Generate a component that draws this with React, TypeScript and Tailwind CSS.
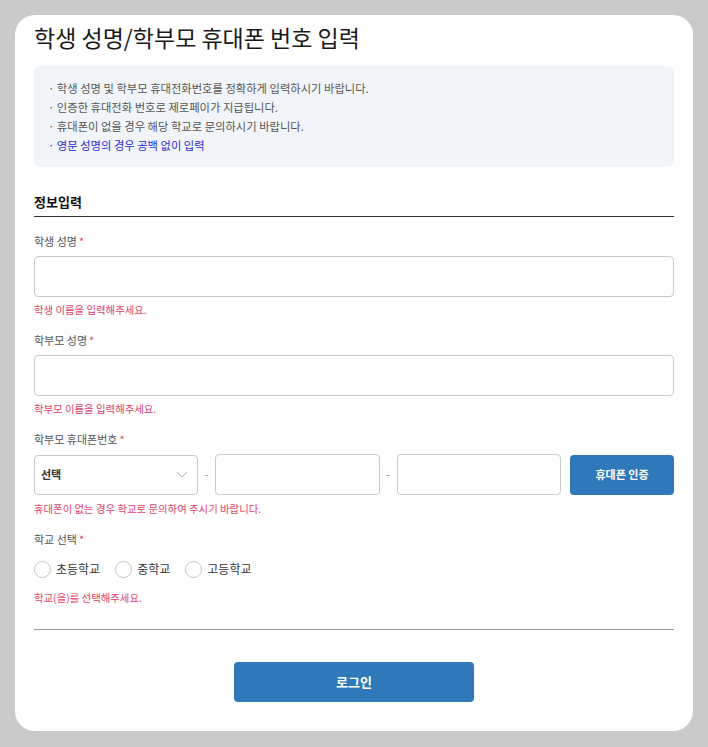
import React, { useState } from 'react';

const font = { fontFamily: '"Noto Sans CJK KR", "Noto Sans", sans-serif' };

function Label({ text }: { text: string }) {
  return (
    <div className="text-[11px] leading-[18px] text-[#555]">
      {text}
      <span className="ml-[2px] text-[#e0436b]">*</span>
    </div>
  );
}

function ErrorText({ text, className = '' }: { text: string; className?: string }) {
  return <p className={`text-[10.4px] leading-[16px] text-[#e0436b] ${className}`}>{text}</p>;
}

function TextInput({ className = '' }: { className?: string }) {
  return (
    <input
      type="text"
      className={`h-[41px] rounded-[4px] border border-[#c9c9c9] bg-white px-3 text-[12px] outline-none ${className}`}
    />
  );
}

export default function App() {
  const [school, setSchool] = useState('');
  const schools = ['초등학교', '중학교', '고등학교'];

  return (
    <div className="min-h-screen bg-[#cacaca] p-[15px]" style={font}>
      <div className="rounded-[20px] bg-white px-[19px] pt-[6px] pb-[29px]">
        <h1 className="text-[23px] leading-[32px] font-normal text-[#1a1a1a]">학생 성명/학부모 휴대폰 번호 입력</h1>

        {/* 안내 */}
        <ul className="mt-[13px] rounded-[6px] bg-[#f1f5f9] px-[14px] pt-[13px] pb-[12px] text-[11.3px] leading-[19px] text-[#555]">
          <li>· 학생 성명 및 학부모 휴대전화번호를 정확하게 입력하시기 바랍니다.</li>
          <li>· 인증한 휴대전화 번호로 제로페이가 지급됩니다.</li>
          <li>· 휴대폰이 없을 경우 해당 학교로 문의하시기 바랍니다.</li>
          <li className="text-[#2b2bd0]">· 영문 성명의 경우 공백 없이 입력</li>
        </ul>

        <h2 className="mt-[25px] border-b border-[#333] pb-[4px] text-[13px] leading-[20px] font-bold text-[#111]">정보입력</h2>

        <div className="mt-[15px]">
          <Label text="학생 성명" />
          <TextInput className="mt-[6px] w-full" />
          <ErrorText text="학생 이름을 입력해주세요." className="mt-[5px]" />
        </div>

        <div className="mt-[13px]">
          <Label text="학부모 성명" />
          <TextInput className="mt-[6px] w-full" />
          <ErrorText text="학부모 이름을 입력해주세요." className="mt-[5px]" />
        </div>

        <div className="mt-[13px]">
          <Label text="학부모 휴대폰번호" />
          <div className="mt-[6px] flex items-center">
            <div className="relative w-[164px]">
              <select className="h-[40px] w-full appearance-none rounded-[4px] border border-[#c9c9c9] bg-white pl-[6px] text-[11px] font-bold text-[#333] outline-none">
                <option>선택</option>
                <option>010</option>
                <option>011</option>
              </select>
              <svg className="pointer-events-none absolute right-[10px] top-[16px]" width="12" height="7" viewBox="0 0 12 7" fill="none">
                <path d="M1 1l5 5 5-5" stroke="#b5b5b5" strokeWidth="1" />
              </svg>
            </div>
            <span className="w-[17px] text-center text-[11px] text-[#999]">-</span>
            <TextInput className="h-[40px] min-w-0 flex-1" />
            <span className="w-[17px] text-center text-[11px] text-[#999]">-</span>
            <TextInput className="h-[40px] min-w-0 flex-1" />
            <button className="ml-[9px] h-[40px] w-[104px] rounded-[4px] bg-[#2f78b9] text-[11px] font-bold text-white">
              휴대폰 인증
            </button>
          </div>
          <ErrorText text="휴대폰이 없는 경우 학교로 문의하여 주시기 바랍니다." className="mt-[6px]" />
        </div>

        <div className="mt-[13px]">
          <Label text="학교 선택" />
          <div className="mt-[11px] flex items-center gap-[15px]">
            {schools.map((s) => (
              <label key={s} className="flex cursor-pointer items-center gap-[5px] text-[12px] leading-[20px] text-[#333]">
                <input
                  type="radio"
                  name="school"
                  checked={school === s}
                  onChange={() => setSchool(s)}
                  className="h-[17px] w-[17px] appearance-none rounded-full border border-[#c4c4c4] bg-white checked:border-[5px] checked:border-[#2f78b9]"
                />
                {s}
              </label>
            ))}
          </div>
          <ErrorText text="학교(을)를 선택해주세요." className="mt-[11px]" />
        </div>

        <div className="mt-[23px] border-t border-[#9a9a9a]" />

        <div className="mt-[32px] flex justify-center">
          <button className="h-[40px] w-[240px] rounded-[4px] bg-[#2f78b9] text-[13px] font-bold text-white">로그인</button>
        </div>
      </div>
    </div>
  );
}
